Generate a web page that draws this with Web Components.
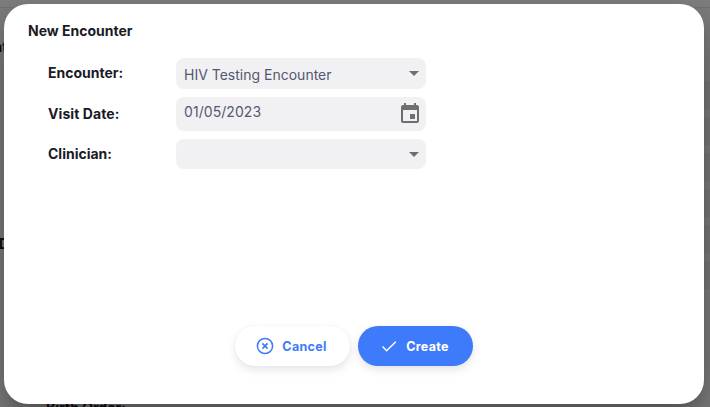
<!DOCTYPE html>
<html lang="en"><head><meta charset="utf-8"><title>New Encounter</title>
<style>html,body{margin:0;height:100%;overflow:hidden}body{font-family:Inter,"Open Sans",sans-serif;background:#808080}</style></head><body>
<encounter-page>
 <encounter-dialog>
  <span slot="title">New Encounter</span>
  <form-row label="Encounter:" style="--h:31px;--up:2px"><select-field>HIV Testing Encounter</select-field></form-row>
  <form-row label="Visit Date:" style="--h:34px;--track:.08px"><date-field>01/05/2023</date-field></form-row>
  <form-row label="Clinician:" style="--h:30px"><select-field></select-field></form-row>
  <pill-button slot="actions" icon="cancel">Cancel</pill-button>
  <pill-button slot="actions" icon="check" class="primary">Create</pill-button>
 </encounter-dialog>
</encounter-page>
<script>
function define(name, html){
  customElements.define(name, class extends HTMLElement{
    constructor(){super();const t=document.createElement('template');
      t.innerHTML=typeof html==='function'?html(this):html;
      this.attachShadow({mode:'open'}).append(t.content.cloneNode(true));}
  });
}
define('encounter-page', `<style>
:host{display:block;position:relative;width:710px;height:407px;overflow:hidden;background:#7d7d7d}
.head{height:7px;background:#808080;border-bottom:1px solid #747474}
.t{position:absolute;font-size:14px;line-height:17px;font-weight:700;color:#0c0c10;white-space:nowrap}
.cells{position:absolute;left:704px;right:0;top:81px;display:grid;gap:8px;grid-auto-rows:28px}
.cells i{background:#787878}
</style><div class="head"></div>
<div class="cells"><i></i><i></i><i></i><i></i><i></i><i></i></div>
<span class="t" style="left:-6.5px;top:38px">nt</span>
<span class="t" style="left:-1px;top:235px">D</span>
<span class="t" style="left:46px;top:399px">Birth Order:</span>
<slot></slot>`);
define('encounter-dialog', `<style>
:host{position:absolute;left:4px;top:4px;width:700px;height:400px;box-sizing:border-box;border-radius:24px;background:#fff;padding:18px 24px 38px;display:flex;flex-direction:column;
box-shadow:0 11px 15px -7px rgba(0,0,0,.2),0 24px 38px 3px rgba(0,0,0,.14),0 9px 46px 8px rgba(0,0,0,.12)}
h1{margin:0;font-size:14px;line-height:18px;font-weight:700;color:#1a1a27}
.form{display:flex;flex-direction:column;gap:8px;padding:18px 20px 0}
.actions{margin-top:auto;display:flex;gap:8px;padding-left:207px}
</style><h1><slot name="title"></slot></h1><div class="form"><slot></slot></div><div class="actions"><slot name="actions"></slot></div>`);
define('form-row', h=>`<style>
:host{display:grid;grid-template-columns:128px 250px;height:var(--h);align-items:center}
b{font-size:14px;line-height:18px;font-weight:700;color:#1a1a27;padding-bottom:var(--up,0);letter-spacing:var(--track,0)}
::slotted(*){height:100%}
</style><b>${h.getAttribute('label')}</b><slot></slot>`);
const field=`:host{display:flex;box-sizing:border-box;background:#f1f1f4;border-radius:8px;font-size:14px;color:#555770;line-height:18px}span{flex:1}svg{flex:none;fill:#6e6e6e}`;
define('select-field', `<style>${field}:host{align-items:center;padding:0 7px 0 8px}span{padding-top:3px}</style><span><slot></slot></span><svg width="10" height="5" viewBox="0 0 10 5"><path d="M0 0h10L5 5z"/></svg>`);
define('date-field', `<style>${field}:host{padding:6px 4px 0 8px}span{letter-spacing:.06px}svg{margin-top:-1px}</style><span><slot></slot></span><svg width="24" height="24" viewBox="0 0 24 24"><path d="M19 3h-1V1h-2v2H8V1H6v2H5c-1.11 0-1.99.9-1.99 2L3 19c0 1.1.89 2 2 2h14c1.1 0 2-.9 2-2V5c0-1.1-.9-2-2-2zm0 16H5V8h14v11zm-7-7h5v5h-5z"/></svg>`);
const icons={cancel:'<circle cx="10" cy="10" r="7.6"/><path stroke-width="1.7" d="m7.4 7.4 5.2 5.2m0-5.2-5.2 5.2"/>',check:'<path d="m3.6 10.6 4 4.1 9.2-9"/>'};
define('pill-button', h=>`<style>
:host{display:flex;align-items:center;justify-content:center;gap:7px;width:115px;height:40px;box-sizing:border-box;padding-right:3px;border-radius:20px;background:#fff;color:#3e7bfa;font-size:12.5px;letter-spacing:.3px;font-weight:700;box-shadow:0 0 2px rgba(40,41,61,.06),0 4px 8px rgba(96,97,112,.16)}
:host(.primary){background:#3e7bfa;color:#fff}
svg{fill:none;stroke:currentColor;stroke-width:1.5}
</style><svg width="20" height="20" viewBox="0 0 20 20">${icons[h.getAttribute('icon')]}</svg><span><slot></slot></span>`);
</script></body></html>
